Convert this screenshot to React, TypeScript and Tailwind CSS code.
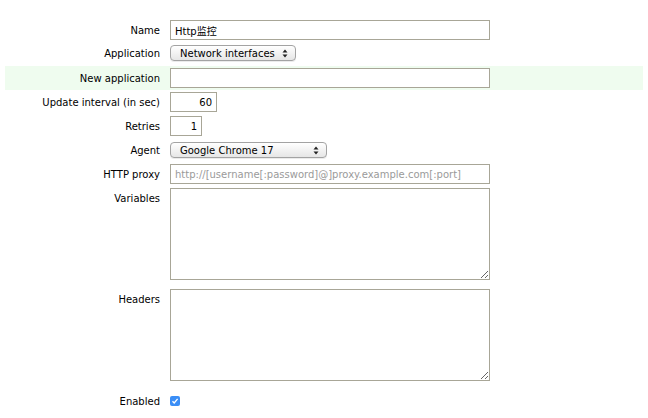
import type { ReactNode } from "react"
import clsx from "clsx"

const font = "font-['DejaVu_Sans','Noto_Sans_CJK_SC',sans-serif]"

function Row({
  label,
  children,
  className,
  center,
}: {
  label: string
  children: ReactNode
  className?: string
  center?: boolean
}) {
  return (
    <div className={clsx("flex", center ? "items-center" : "items-start", className)}>
      <div className="h-[20px] w-[155px] shrink-0 pt-[2px] text-right leading-[18px] text-black">{label}</div>
      <div className="ml-[10px] flex">{children}</div>
    </div>
  )
}

function UpDown() {
  return (
    <svg width="6" height="9" viewBox="0 0 6 9" className="shrink-0">
      <path d="M3 0.5 L5.5 3.5 L0.5 3.5 Z" fill="#222" />
      <path d="M3 8.5 L5.5 5.5 L0.5 5.5 Z" fill="#222" />
    </svg>
  )
}

function Select({ value, width }: { value: string; width: string }) {
  return (
    <div
      className={clsx(
        "flex h-[16px] items-center justify-between rounded-[4px] border border-[#a3a3a3] bg-gradient-to-b from-white to-[#e6e6e6] pl-[9px] pr-[7px] pt-[1px] leading-[14px] text-black shadow-[0_1px_0_rgba(0,0,0,0.08)]",
        width
      )}
    >
      <span>{value}</span>
      <UpDown />
    </div>
  )
}

const inputCls =
  "h-[20px] border border-[#a8a697] bg-white px-[4px] text-[10px] text-black outline-none placeholder:text-[#9a9a9a]"

export default function App() {
  return (
    <div className={clsx("h-[418px] w-[648px] bg-white pt-[18px] text-[10px]", font)}>
      <div className="mx-[5px]">
        <Row label="Name" className="py-[2px]">
          <input className={clsx(inputCls, "w-[320px]", font)} defaultValue="Http监控" />
        </Row>

        <Row label="Application" center className="mb-[2px] h-[22px]">
          <Select value="Network interfaces" width="w-[126px]" />
        </Row>

        <Row label="New application" className="bg-[#effcef] py-[2px]">
          <input className={clsx(inputCls, "w-[320px]", font)} />
        </Row>

        <Row label="Update interval (in sec)" className="py-[2px]">
          <input className={clsx(inputCls, "w-[47px] text-right", font)} defaultValue="60" />
        </Row>

        <Row label="Retries" className="py-[2px]">
          <input className={clsx(inputCls, "w-[32px] text-right", font)} defaultValue="1" />
        </Row>

        <Row label="Agent" center className="h-[24px]">
          <Select value="Google Chrome 17" width="w-[157px]" />
        </Row>

        <Row label="HTTP proxy" className="py-[2px]">
          <input
            className={clsx(inputCls, "w-[320px]", font)}
            placeholder="http://[username[:password]@]proxy.example.com[:port]"
          />
        </Row>

        <Row label="Variables" className="pt-[2px]">
          <textarea className={clsx(inputCls, "block h-[92px] w-[320px]", font)} />
        </Row>

        <Row label="Headers" className="pt-[9px]">
          <textarea className={clsx(inputCls, "block h-[92px] w-[320px]", font)} />
        </Row>

        <Row label="Enabled" center className="mt-[10px] h-[20px]">
          <div className="flex h-[10px] w-[10px] items-center justify-center rounded-[2px] bg-[#3b8ef6]">
            <svg width="8" height="8" viewBox="0 0 8 8">
              <path d="M1.5 4.2 L3.2 6 L6.6 1.8" fill="none" stroke="white" strokeWidth="1.3" />
            </svg>
          </div>
        </Row>
      </div>
    </div>
  )
}
